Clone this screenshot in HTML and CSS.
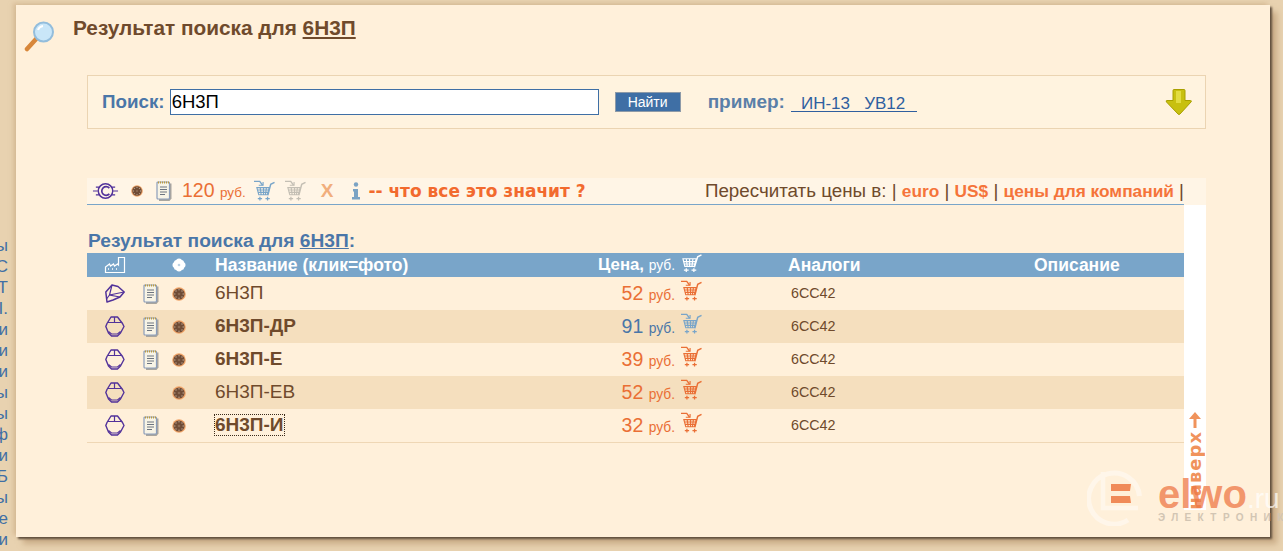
FILE: index.html
```html
<!DOCTYPE html>
<html lang="ru">
<head>
<meta charset="utf-8">
<title>Результат поиска</title>
<link rel="stylesheet" href="styles.css">
</head>
<body>
<svg class="defs" width="0" height="0">
  <defs>
    <symbol id="cart0" viewBox="0 0 22 20">
      <path d="M2 5h14l-2 8H4z M5.500 5l1 8 M9 5v8 M12.500 5l-1 8 M3 8h12 M3.500 10.500h11" fill="none" stroke="currentColor" stroke-width="1.200"/>
      <path d="M14 14l3.500-11 4-2" fill="none" stroke="currentColor" stroke-width="1.500"/>
      <path d="M3 17h5 M5.500 15v4 M11 17h5 M13.500 15v4" stroke="currentColor" stroke-width="1.300"/>
    </symbol>
    <symbol id="cart" viewBox="0 0 22 22">
      <path d="M0 1.500h6l3 4" fill="none" stroke="currentColor" stroke-width="1.400"/>
      <path d="M5 5.500h4.500v-3.500" fill="none" stroke="currentColor" stroke-width="1.200"/>
      <path d="M3 8h13l-2 7.500H5z M6.500 8l1 7.500 M10 8v7.500 M13 8l-1 7.500 M4 10.500h11.500 M4.500 13h10.500" fill="none" stroke="currentColor" stroke-width="1.200"/>
      <path d="M14.500 16l3-11.500 4-2" fill="none" stroke="currentColor" stroke-width="1.500"/>
      <path d="M4 19.500h4.500 M6.200 17.500v4 M12 19.500h4.500 M14.200 17.500v4" stroke="currentColor" stroke-width="1.300"/>
    </symbol>
    <symbol id="note" viewBox="0 0 16 20">
      <path d="M3 2.500h12.500v15l-2 2.500H3z" fill="#a9a69f"/>
      <rect x="1" y="1" width="12.500" height="17" rx="1" fill="#f8f4e6" stroke="#8b9dbb" stroke-width="1.200"/>
      <path d="M2 1.500h11" stroke="#bd9b3e" stroke-width="2" stroke-dasharray="1 1"/>
      <path d="M4 6h7M4 8.500h7M4 11h7M4 13.500h5" stroke="#6c7480" stroke-width="1"/>
    </symbol>
    <symbol id="flower" viewBox="0 0 14 14">
      <circle cx="7" cy="7" r="6.800" fill="#f0a468"/>
      <circle cx="7" cy="7" r="5.600" fill="#6f4c36"/>
      <g fill="#b49a84">
        <circle cx="7" cy="2.800" r=".8"/><circle cx="7" cy="11.200" r=".8"/>
        <circle cx="2.800" cy="7" r=".8"/><circle cx="11.200" cy="7" r=".8"/>
        <circle cx="4" cy="4" r=".8"/><circle cx="10" cy="4" r=".8"/>
        <circle cx="4" cy="10" r=".8"/><circle cx="10" cy="10" r=".8"/>
      </g>
      <circle cx="7" cy="7" r="1.300" fill="#8c6a52"/>
    </symbol>
    <symbol id="tube" viewBox="0 0 20 21">
      <path d="M6 1L12.500 1L17.500 7.500L19 10.500L15.500 17L12.500 20H6.500L3.500 17L.8 10.500L2 7.500Z" fill="none" stroke="#52329a" stroke-width="1.400" stroke-linejoin="round"/>
      <path d="M3 6.500h13 M9.500 1v5.500 M3.500 15.500l3 2.500h6l3-2.500" fill="none" stroke="#52329a" stroke-width="1.200"/>
    </symbol>
    <symbol id="tube2" viewBox="0 0 20 21">
      <path d="M7 2L13 3.500L19.200 9L15 14L8 17L2 19L.8 9Z" fill="none" stroke="#52329a" stroke-width="1.500" stroke-linejoin="round"/>
      <path d="M7 2L4.500 12L15 14 M4.500 12L1.500 16 M4.500 12L19 9" fill="none" stroke="#52329a" stroke-width="1.200"/>
    </symbol>
  </defs>
</svg>
<div class="page">
  <nav class="side">
    <a>ы</a><a>С</a><a>Т</a><a>І.</a><a>и</a><a>и</a><a>и</a><a>ы</a><a>ы</a><a>ф</a><a>и</a><a>Б</a><a>ы</a><a>е</a><a>и</a>
  </nav>
  <main class="panel">
    <header class="title">
      <svg class="lens" viewBox="0 0 32 32" width="32" height="32">
        <path d="M3 29L13 18" stroke="#d8873a" stroke-width="4.500" stroke-linecap="round"/>
        <circle cx="19.500" cy="12" r="9.500" fill="#c9e6f8" stroke="#93bddc" stroke-width="2"/>
        <path d="M14 10a6 6 0 0 1 5-4" stroke="#fff" stroke-width="2" fill="none"/>
      </svg>
      <h1>Результат поиска для <a>6Н3П</a></h1>
    </header>
    <form class="search">
      <label class="search-label">Поиск:</label>
      <input class="search-input" value="6Н3П">
      <button class="search-btn" type="button">Найти</button>
      <span class="example-label">пример:</span>
      <a class="example-link">ИН-13 &nbsp; УВ12</a>
      <svg class="down" viewBox="0 0 28 28" width="28" height="28">
        <path d="M8 2.500q0-1 1-1h10q1 0 1 1v10h5.500q1.500 0 .5 1.500L15 26q-1 1-2 0L1.500 14q-1-1.500.5-1.500H8z" fill="#c8c010" stroke="#a8a000"/>
        <path d="M11 3h5v12h-5z" fill="#e2dc40"/>
      </svg>
    </form>
    <div class="legend">
      <div class="legend-left">
        <svg class="ic-c" viewBox="0 0 28 18" width="27" height="18">
          <circle cx="14" cy="9" r="7.500" fill="none" stroke="#52329a" stroke-width="1.500"/>
          <path d="M18 6a4.500 4.500 0 1 0 0 6" fill="none" stroke="#52329a" stroke-width="1.700"/>
          <path d="M1 9h5M22 9h5M4 5h4M20 5h4M4 13h4M20 13h4" stroke="#52329a" stroke-width="1.200"/>
        </svg>
        <svg class="ic-f" width="12" height="12"><use href="#flower"/></svg>
        <svg class="ic-n" width="16" height="20"><use href="#note"/></svg>
        <span class="legend-price">120 <small>руб.</small></span>
        <svg class="ic-cart blue" width="21" height="21"><use href="#cart"/></svg>
        <svg class="ic-cart grey" width="21" height="21"><use href="#cart"/></svg>
        <span class="ic-x">X</span>
        <svg class="ic-i" viewBox="0 0 10 18" width="10" height="18">
          <circle cx="5" cy="2.500" r="2.200" fill="#7ba3c4"/><path d="M2 7h5v8h2v2.500H1V15h2V9.500H2z" fill="#7ba3c4"/>
        </svg>
        <a class="meaning">-- что все это значит ?</a>
      </div>
      <div class="recalc">Пересчитать цены в: | <a>euro</a> | <a>US$</a> | <a>цены для компаний</a> |</div>
    </div>
    <section class="results">
      <h2>Результат поиска для <a>6Н3П</a>:</h2>
      <div class="row head">
        <span class="c-tube"><svg viewBox="0 0 22 18" width="22" height="18"><path d="M1.500 16.500V11l4-3 1 2 3-2 1 2 3-2 1 1V1.500h6v15z" fill="none" stroke="#fff" stroke-width="1.200"/><path d="M4 13h1M8 13h1M12 13h1" stroke="#fff" stroke-width="1.500"/></svg></span>
        <span class="c-note"></span>
        <span class="c-flower"><svg viewBox="0 0 14 14" width="14" height="14"><circle cx="7" cy="3.500" r="3" fill="#fff"/><circle cx="7" cy="10.500" r="3" fill="#fff"/><circle cx="3.500" cy="7" r="3" fill="#fff"/><circle cx="10.500" cy="7" r="3" fill="#fff"/><circle cx="4.500" cy="4.500" r="2.500" fill="#fff"/><circle cx="9.500" cy="4.500" r="2.500" fill="#fff"/><circle cx="4.500" cy="9.500" r="2.500" fill="#fff"/><circle cx="9.500" cy="9.500" r="2.500" fill="#fff"/><circle cx="7" cy="7" r="1.300" fill="#bcd2e4"/></svg></span>
        <span class="c-name">Название (клик=фото)</span>
        <span class="c-price">Цена, <small>руб.</small></span>
        <span class="c-cart"><svg class="white" width="21" height="19"><use href="#cart0"/></svg></span>
        <span class="c-analog">Аналоги</span>
        <span class="c-desc">Описание</span>
      </div>
      <div class="row">
        <span class="c-tube"><svg width="20" height="21"><use href="#tube2"/></svg></span>
        <span class="c-note"><svg width="16" height="20"><use href="#note"/></svg></span>
        <span class="c-flower"><svg width="14" height="14"><use href="#flower"/></svg></span>
        <span class="c-name">6Н3П</span>
        <span class="c-price">52 <small>руб.</small></span>
        <span class="c-cart"><svg class="orange" width="21" height="21"><use href="#cart"/></svg></span>
        <span class="c-analog">6СС42</span>
        <span class="c-desc"></span>
      </div>
      <div class="row alt">
        <span class="c-tube"><svg width="20" height="21"><use href="#tube"/></svg></span>
        <span class="c-note"><svg width="16" height="20"><use href="#note"/></svg></span>
        <span class="c-flower"><svg width="14" height="14"><use href="#flower"/></svg></span>
        <span class="c-name strong">6Н3П-ДР</span>
        <span class="c-price off">91 <small>руб.</small></span>
        <span class="c-cart"><svg class="lblue" width="21" height="21"><use href="#cart"/></svg></span>
        <span class="c-analog">6СС42</span>
        <span class="c-desc"></span>
      </div>
      <div class="row">
        <span class="c-tube"><svg width="20" height="21"><use href="#tube"/></svg></span>
        <span class="c-note"><svg width="16" height="20"><use href="#note"/></svg></span>
        <span class="c-flower"><svg width="14" height="14"><use href="#flower"/></svg></span>
        <span class="c-name strong">6Н3П-Е</span>
        <span class="c-price">39 <small>руб.</small></span>
        <span class="c-cart"><svg class="orange" width="21" height="21"><use href="#cart"/></svg></span>
        <span class="c-analog">6СС42</span>
        <span class="c-desc"></span>
      </div>
      <div class="row alt">
        <span class="c-tube"><svg width="20" height="21"><use href="#tube"/></svg></span>
        <span class="c-note"></span>
        <span class="c-flower"><svg width="14" height="14"><use href="#flower"/></svg></span>
        <span class="c-name">6Н3П-ЕВ</span>
        <span class="c-price">52 <small>руб.</small></span>
        <span class="c-cart"><svg class="orange" width="21" height="21"><use href="#cart"/></svg></span>
        <span class="c-analog">6СС42</span>
        <span class="c-desc"></span>
      </div>
      <div class="row last">
        <span class="c-tube"><svg width="20" height="21"><use href="#tube"/></svg></span>
        <span class="c-note"><svg width="16" height="20"><use href="#note"/></svg></span>
        <span class="c-flower"><svg width="14" height="14"><use href="#flower"/></svg></span>
        <span class="c-name strong"><span class="focus">6Н3П-И</span></span>
        <span class="c-price">32 <small>руб.</small></span>
        <span class="c-cart"><svg class="orange" width="21" height="21"><use href="#cart"/></svg></span>
        <span class="c-analog">6СС42</span>
        <span class="c-desc"></span>
      </div>
    </section>
    <a class="totop">
      <svg class="totop-arrow" viewBox="0 0 14 18" width="14" height="18"><path d="M7 1L13 8H8.500V17h-3V8H1z" fill="#f0935c"/></svg>
      <span class="totop-text">наверх</span>
    </a>
  </main>
</div>
<div class="logo">
  <svg class="logo-mark" viewBox="0 0 56 56" width="56" height="56">
    <path d="M41 50A25.500 25.500 0 1 1 52.500 26" fill="none" stroke="#fff6ea" stroke-width="5"/>
    <path d="M16 2v36h35" fill="none" stroke="#fff6ea" stroke-width="4.500"/>
    <path d="M24 14h20l-1 7H24zM24 26h19l1 7H24z" fill="#f08a58"/>
  </svg>
  <div class="logo-text">
    <div class="logo-name"><span>elwo</span><i>.ru</i></div>
    <div class="logo-sub">ЭЛЕКТРОНИК</div>
  </div>
</div>
</body>
</html>
```
FILE: styles.css
```css
* { box-sizing: border-box; }
html, body { margin: 0; height: 551px; overflow: hidden; }
body {
  background: #e8d2b0;
  font-family: "Liberation Sans", Arial, sans-serif;
  color: #6f4a2c;
  position: relative;
  width: 1283px;
}
.defs { position: absolute; }
.page { display: flex; height: 551px; padding-top: 5px; }
.side {
  width: 16px;
  flex: none;
  padding-top: 230px;
  font-size: 17px;
  line-height: 21px;
  color: #3f6fa5;
  overflow: hidden;
}
.side a { display: flex; justify-content: flex-end; width: 8px; height: 21px; overflow: hidden; }
.panel {
  position: relative;
  width: 1254px;
  height: 532px;
  background: #fff0da;
  box-shadow: 2px 2px 2px #5f4e3c, 7px 7px 6px rgba(175,140,100,.55), -3px -2px 4px rgba(205,175,135,.6);
  padding: 0 0 0 71px;
}
.title { display: flex; height: 70px; margin-left: -63px; padding-top: 10px; }
.lens { margin: 5px 9px 0 0; flex: none; }
.title h1 { margin: 1px 0 0 8px; font-size: 20.800px; line-height: 24px; font-weight: 700; color: #6f4a2c; white-space: nowrap; }
.title h1 a, .results h2 a { text-decoration: underline; }
.search {
  display: flex;
  align-items: center;
  width: 1119px;
  height: 54px;
  background: #fff3df;
  border: 1px solid #ebd4b2;
  padding: 0 12px 0 14px;
}
.search-label { font-size: 18.800px; font-weight: 700; color: #4a76a8; margin-right: 5px; white-space: nowrap; }
.search-input {
  width: 429px;
  height: 26px;
  border: 1px solid #3f6fa5;
  background: #fff;
  font: 18.500px "Liberation Sans", Arial, sans-serif;
  color: #000;
  padding: 0 1px;
  outline: none;
}
.search-btn {
  margin-left: 16px;
  width: 66px;
  height: 20px;
  background: #3f6fa5;
  border: 1px solid #8d9aa8;
  color: #fff;
  font: 14px "Liberation Sans", Arial, sans-serif;
  padding: 0;
}
.example-label { margin-left: 27px; font-size: 19px; font-weight: 700; color: #5a7fa8; white-space: nowrap; }
.example-link {
  margin-left: 6px;
  width: 126px;
  font-size: 17px;
  line-height: 15px;
  color: #2f5f9f;
  border-bottom: 1px solid #2f5f9f;
  padding: 4px 0 0 10px;
  white-space: nowrap;
}
.down { margin-left: auto; }
.legend {
  display: flex;
  justify-content: space-between;
  align-items: center;
  width: 1119px;
  height: 27px;
  margin-top: 49px;
  background: #fff5e6;
  padding: 0 22px 2px 0;
  position: relative;
}
.legend::after {
  content: "";
  position: absolute;
  left: 0;
  top: 26px;
  width: 1097px;
  height: 1px;
  background: #79a5c9;
}
.legend-left { display: flex; align-items: center; padding-left: 5px; }
.ic-f { margin-left: 12px; }
.ic-n { margin-left: 13px; }
.legend-price { margin-left: 10px; font-size: 19.500px; color: #ea6f35; white-space: nowrap; }
.legend-price small { font-size: 13.500px; }
.ic-cart { margin-left: 8px; }
.ic-cart + .ic-cart { margin-left: 10px; }
.blue { color: #79a5c9; }
.grey { color: #c4bfb4; }
.orange { color: #ea6f35; }
.lblue { color: #79a5c9; }
.white { color: #fff; }
.ic-x { margin-left: 15px; font-size: 19px; font-weight: 700; color: #f1ae7c; }
.ic-i { margin-left: 18px; }
.meaning {
  margin-left: 7px;
  font-family: "DejaVu Sans", sans-serif;
  font-weight: 700;
  font-size: 17px;
  color: #f26a2e;
  white-space: nowrap;
}
.recalc { font-size: 18.800px; color: #6f4a2c; white-space: nowrap; }
.recalc a { font-weight: 700; color: #f5743a; font-size: 17.300px; }
.results { width: 1097px; margin-top: 25px; }
.results h2 {
  margin: 0 0 2px 1px;
  font-size: 19.200px;
  line-height: 21px;
  font-weight: 700;
  color: #4a76a8;
  white-space: nowrap;
}
.row {
  display: grid;
  grid-template-columns: 46px 36px 20px 300px 186px 113px 246px 1fr;
  height: 33px;
  align-items: center;
  font-size: 19px;
}
.row.head {
  height: 24px;
  background: #79a5c9;
  color: #fff;
  font-weight: 700;
  font-size: 17.500px;
}
.row.alt { background: #f5dfbe; }
.row.last { border-bottom: 1px solid #efd7b5; height: 34px; }
.row > span { display: flex; align-items: center; min-width: 0; white-space: nowrap; }
.c-tube, .c-note, .c-flower { justify-content: center; }
.c-tube { padding-left: 10px; }
.c-name { padding: 0 0 1px 26px; }
.row .c-price {
  display: block;
  text-align: right;
  font-size: 19.500px;
  color: #ea6f35;
}
.c-price small { font-size: 13.800px; }
.row .c-price.off { color: #4a76a8; }
.row.head .c-price { color: #fff; font-size: 16.800px; }
.head .c-price small { font-weight: 400; }
.c-cart { padding-left: 6px; margin-top: -7px; }
.head .c-cart { margin-top: -3px; }
.c-analog { font-size: 14.300px; padding: 0 0 1px 3px; }
.head .c-analog { font-size: 17.500px; padding: 0; }
.head .c-name { padding-bottom: 0; }
.focus { outline: 1px dotted #3a2a1a; line-height: 20px; }
.strong { font-weight: 700; }
.totop {
  position: absolute;
  left: 1168px;
  top: 200px;
  width: 22px;
  height: 305px;
  background: #fff;
  display: flex;
  flex-direction: column;
  align-items: center;
  justify-content: flex-end;
  gap: 2px;
}
.totop-arrow { flex: none; }
.totop-text {
  writing-mode: vertical-rl;
  transform: rotate(180deg);
  font-family: "DejaVu Sans", sans-serif;
  font-size: 18px;
  letter-spacing: 1px;
  line-height: 22px;
  font-weight: 700;
  color: #f0935c;
  white-space: nowrap;
}
.logo {
  position: absolute;
  left: 1087px;
  top: 470px;
  width: 196px;
  height: 62px;
  display: flex;
  overflow: hidden;
}
.logo-mark { flex: none; margin-right: 15px; }
.logo-text { padding-top: 8px; white-space: nowrap; }
.logo-name { font-size: 40px; line-height: 32px; font-weight: 700; }
.logo-name span { color: rgba(238,120,70,.75); }
.logo-name i { font-style: normal; font-size: 28px; font-weight: 400; color: rgba(255,255,255,.7); }
.logo-sub { font-size: 10px; font-weight: 700; line-height: 11px; letter-spacing: 6.400px; color: #d2c5b3; margin-top: -3px; }
```
